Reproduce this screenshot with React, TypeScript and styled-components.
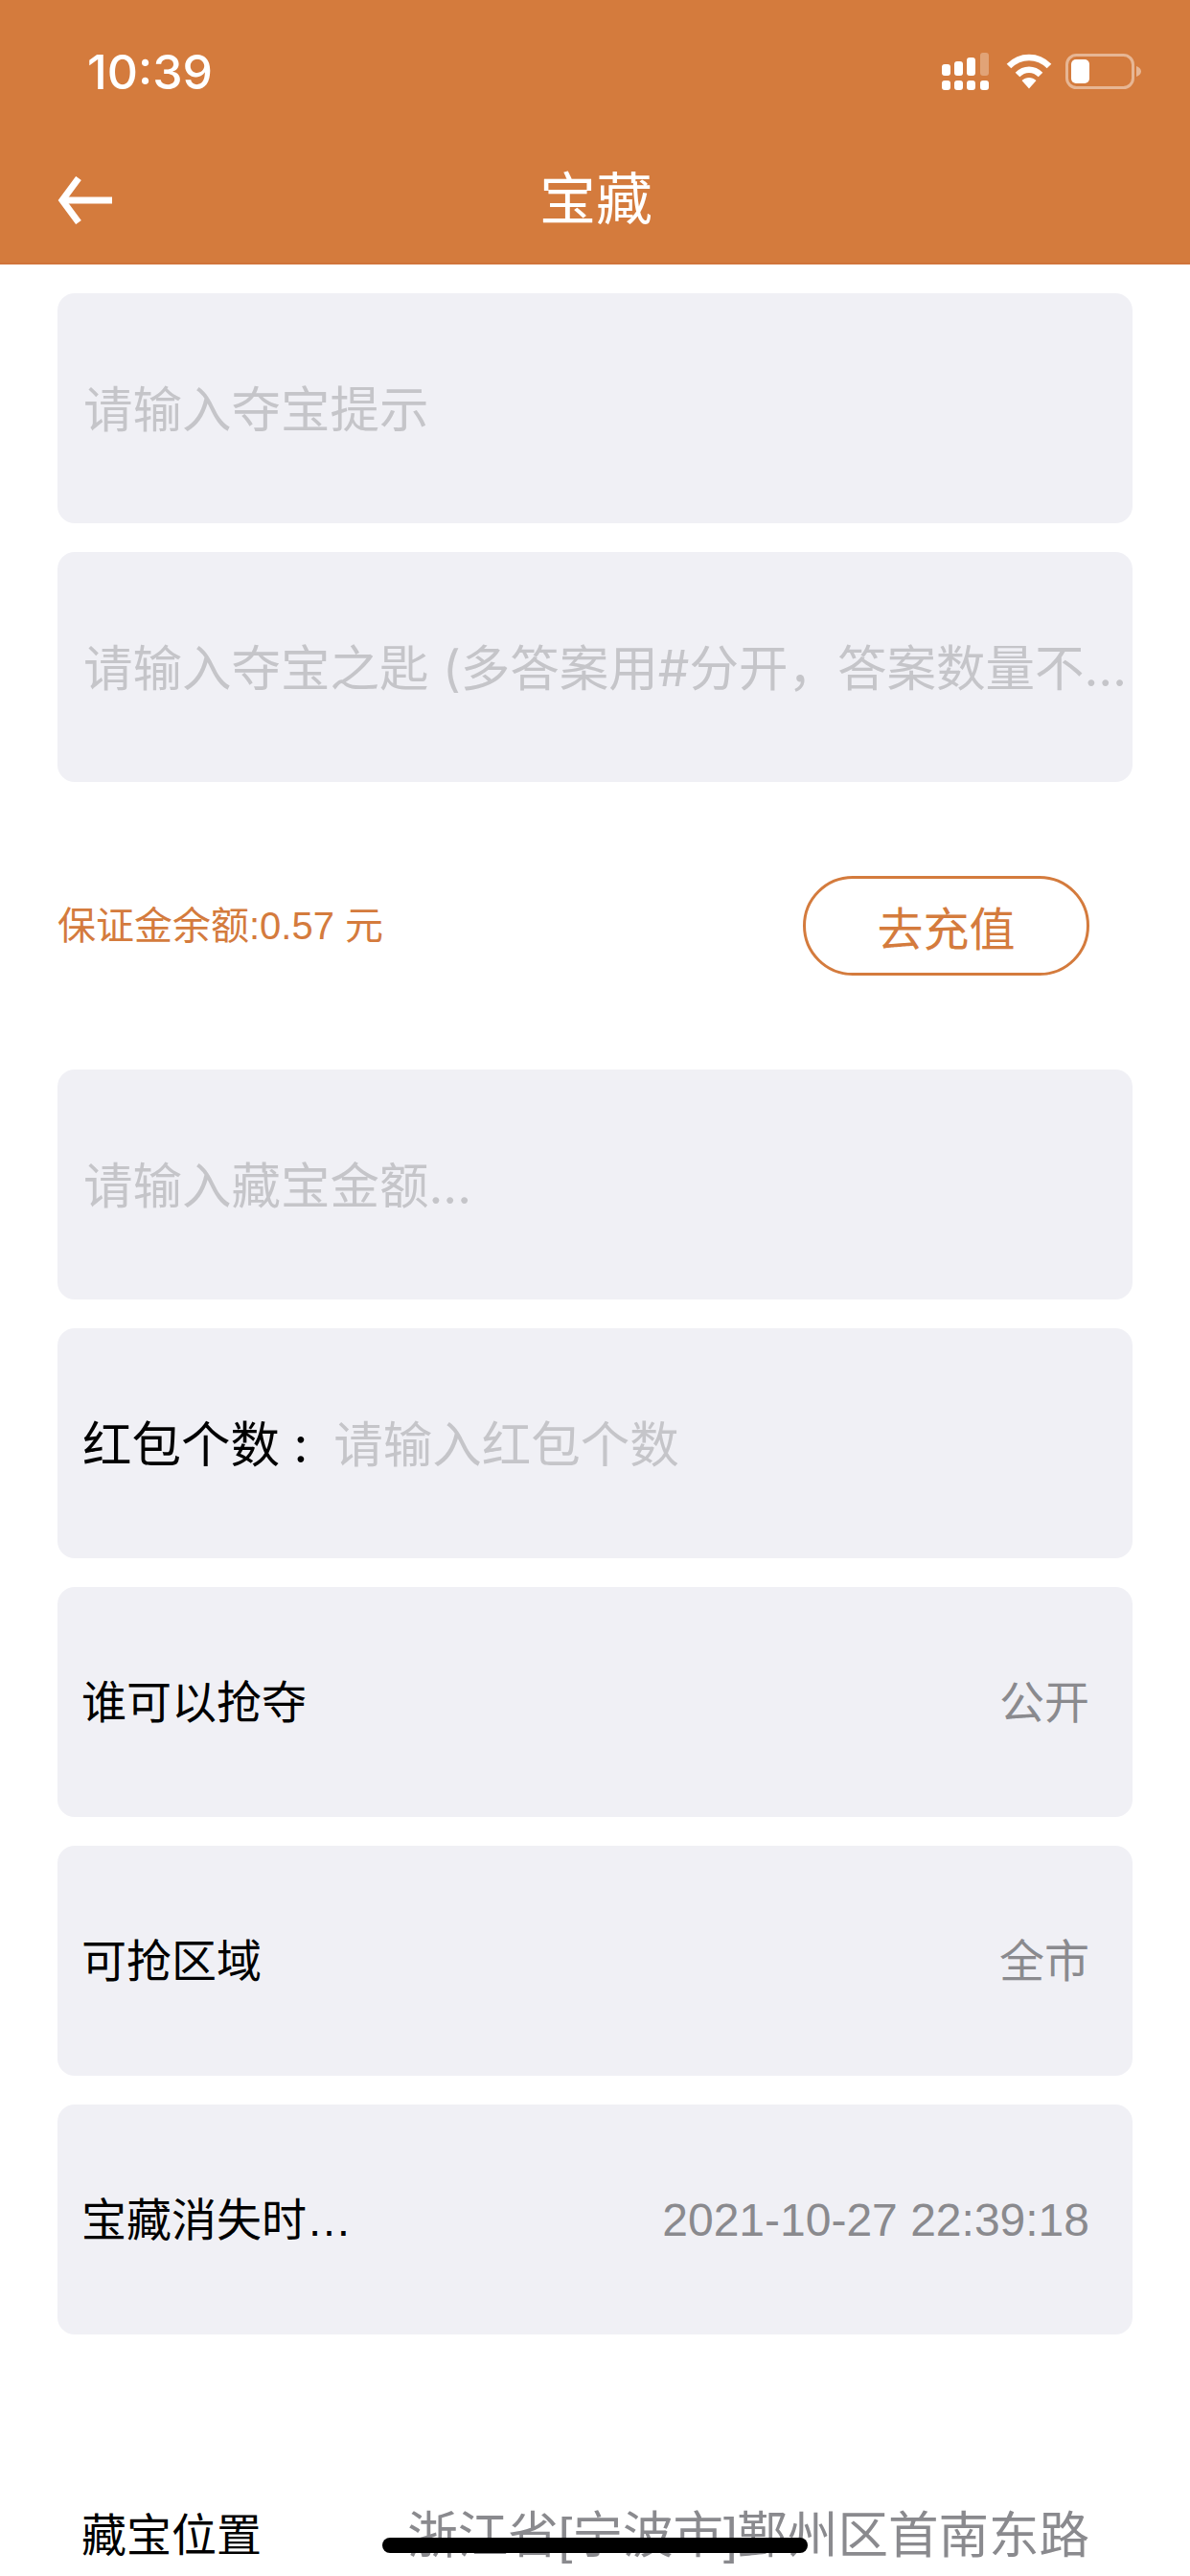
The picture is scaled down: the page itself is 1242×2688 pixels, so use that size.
import styled, { createGlobalStyle } from "styled-components";

const GlobalStyle = createGlobalStyle`
  html, body {
    margin: 0;
    padding: 0;
    background: #fff;
  }
  * {
    box-sizing: border-box;
  }
`;

const Page = styled.div`
  position: relative;
  width: 1242px;
  height: 2688px;
  overflow: hidden;
  background: #fff;
  font-family: "Liberation Sans", "Noto Sans CJK SC", sans-serif;
`;

const Header = styled.header`
  height: 276px;
  background: #d47b3d;
  border-bottom: 2px solid #d0743a;
  color: #fff;
  display: flex;
  flex-direction: column;
`;

const StatusBar = styled.div`
  height: 150px;
  padding: 46px 50px 0 91px;
  display: flex;
  justify-content: space-between;
  align-items: flex-start;
`;

const Time = styled.span`
  font-family: Inter, sans-serif;
  font-size: 50px;
  line-height: 58px;
  font-weight: 500;
`;

const StatusIcons = styled.div`
  display: flex;
  align-items: flex-start;
  gap: 14px;
  padding-top: 9px;
`;

const NavBar = styled.div`
  position: relative;
  flex: 1;
  display: flex;
  align-items: center;
  justify-content: center;
`;

const BackIcon = styled.svg`
  position: absolute;
  left: 60px;
  top: 34px;
`;

const Title = styled.h1`
  margin: 0;
  font-size: 59px;
  line-height: 70px;
  font-weight: 400;
  position: relative;
  left: 1px;
  top: -3px;
`;

const Form = styled.main`
  padding: 30px 60px 0;
  display: flex;
  flex-direction: column;
`;

const Card = styled.div`
  height: 240px;
  margin-bottom: 30px;
  border-radius: 18px;
  background: #f0f0f5;
  padding: 2px 0 0 ${(p: { $inset?: number }) => p.$inset ?? 27}px;
  display: flex;
  align-items: center;
`;

const SelectCard = styled(Card)`
  justify-content: space-between;
  padding: 2px 45px 0 25px;
`;

const Placeholder = styled.span`
  font-family: Inter, "Noto Sans CJK SC", sans-serif;
  font-size: 51.5px;
  line-height: 70px;
  color: #c5c5c9;
  white-space: nowrap;
  overflow: hidden;
  text-overflow: ellipsis;
`;

const FieldLabel = styled.span`
  font-family: Inter, "Noto Sans CJK SC", sans-serif;
  font-size: 51.5px;
  line-height: 70px;
  color: #000;
  white-space: nowrap;
  margin-right: 27px;
`;

const RowLabel = styled.span`
  font-size: 47px;
  line-height: 60px;
  color: #000;
  white-space: nowrap;
`;

const RowValue = styled.span<{ $size?: number }>`
  font-size: ${(p) => p.$size ?? 47}px;
  line-height: 60px;
  color: #8a8a8e;
  white-space: nowrap;
`;

const BalanceRow = styled.div`
  height: 270px;
  padding: 0 45px 30px 0;
  display: flex;
  align-items: center;
  justify-content: space-between;
`;

const Balance = styled.span`
  font-size: 40px;
  line-height: 50px;
  color: #d47b3d;
`;

const RechargeButton = styled.button`
  width: 299px;
  height: 104px;
  border: 3px solid #d47b3d;
  border-radius: 52px;
  background: #fff;
  color: #d47b3d;
  font: inherit;
  font-size: 48px;
  padding: 0;
`;

const LocationRow = styled.div`
  margin-top: 150px;
  padding: 0 45px 0 25px;
  display: flex;
  justify-content: space-between;
  align-items: center;
`;

const HomeIndicator = styled.div`
  position: absolute;
  left: 399px;
  top: 2648px;
  width: 444px;
  height: 16px;
  border-radius: 8px;
  background: #000;
`;

const SignalIcon = () => (
  <svg width="53" height="40" viewBox="0 0 53 40" fill="#fff">
    <rect x="0" y="12" width="9" height="12" rx="3" />
    <rect x="13" y="9" width="9" height="15" rx="3" />
    <rect x="26" y="5" width="9" height="19" rx="3" />
    <rect x="40" y="0" width="9" height="24" rx="3" opacity="0.3" />
    <rect x="0" y="29" width="9" height="10" rx="3" />
    <rect x="13" y="29" width="9" height="10" rx="3" />
    <rect x="26" y="29" width="9" height="10" rx="3" />
    <rect x="40" y="29" width="9" height="10" rx="3" />
  </svg>
);

const WifiIcon = () => (
  <svg width="48" height="38" viewBox="0 0 48 38" fill="none" stroke="#fff" strokeWidth="6.5">
    <path d="M3 14 C15 2 33 2 45 14" />
    <path d="M12 23 C19 16 29 16 36 23" />
    <path d="M16.5 29 L24 37.5 L31.5 29 C27 25 21 25 16.5 29 Z" fill="#fff" stroke="none" />
  </svg>
);

const BatteryIcon = () => (
  <svg width="80" height="38" viewBox="0 0 80 38">
    <rect x="1.5" y="2.5" width="69" height="34" rx="10" fill="none" stroke="#fff" strokeOpacity="0.45" strokeWidth="3" />
    <rect x="6" y="7" width="19" height="25" rx="5" fill="#fff" />
    <path d="M74 14 C77 15 79 17 79 19.5 C79 22 77 24 74 25 Z" fill="#fff" fillOpacity="0.45" />
  </svg>
);

const App = () => (
  <Page>
    <GlobalStyle />
    <Header>
      <StatusBar>
        <Time>10:39</Time>
        <StatusIcons>
          <SignalIcon />
          <WifiIcon />
          <BatteryIcon />
        </StatusIcons>
      </StatusBar>
      <NavBar>
        <BackIcon width="58" height="50" viewBox="0 0 58 50" fill="none" stroke="#fff" strokeWidth="7">
          <path d="M57 25 H6" />
          <path d="M22 2 L5 25 L22 48" />
        </BackIcon>
        <Title>宝藏</Title>
      </NavBar>
    </Header>
    <Form>
      <Card>
        <Placeholder>请输入夺宝提示</Placeholder>
      </Card>
      <Card>
        <Placeholder>请输入夺宝之匙 (多答案用#分开，答案数量不…</Placeholder>
      </Card>
      <BalanceRow>
        <Balance>保证金余额:0.57 元</Balance>
        <RechargeButton>去充值</RechargeButton>
      </BalanceRow>
      <Card>
        <Placeholder>请输入藏宝金额...</Placeholder>
      </Card>
      <Card $inset={26}>
        <FieldLabel>红包个数 :</FieldLabel>
        <Placeholder>请输入红包个数</Placeholder>
      </Card>
      <SelectCard>
        <RowLabel>谁可以抢夺</RowLabel>
        <RowValue>公开</RowValue>
      </SelectCard>
      <SelectCard>
        <RowLabel>可抢区域</RowLabel>
        <RowValue>全市</RowValue>
      </SelectCard>
      <SelectCard>
        <RowLabel>宝藏消失时…</RowLabel>
        <RowValue $size={48}>2021-10-27 22:39:18</RowValue>
      </SelectCard>
      <LocationRow>
        <RowLabel>藏宝位置</RowLabel>
        <RowValue $size={52.5}>浙江省[宁波市]鄞州区首南东路</RowValue>
      </LocationRow>
    </Form>
    <HomeIndicator />
  </Page>
);

export default App;
